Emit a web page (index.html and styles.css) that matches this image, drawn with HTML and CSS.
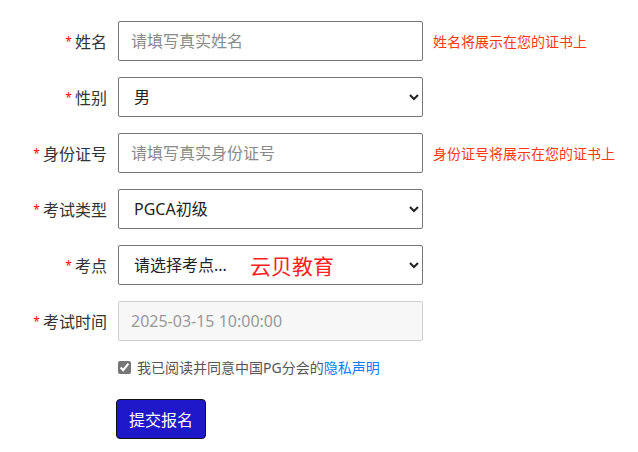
FILE: index.html
```html
<!DOCTYPE html>
<html lang="zh-CN">
<head>
    <meta charset="UTF-8">
    <meta name="viewport" content="width=device-width, initial-scale=1.0">
    <title>报名</title>
    <link rel="stylesheet" href="styles.css">
</head>
<body>
    <form class="signup">
        <div class="row">
            <label class="lab"><i>*</i>姓名</label>
            <input type="text" class="field" placeholder="请填写真实姓名">
            <span class="hint">姓名将展示在您的证书上</span>
        </div>
        <div class="row">
            <label class="lab"><i>*</i>性别</label>
            <select class="field">
                <option>男</option>
                <option>女</option>
            </select>
        </div>
        <div class="row">
            <label class="lab"><i>*</i>身份证号</label>
            <input type="text" class="field" placeholder="请填写真实身份证号">
            <span class="hint">身份证号将展示在您的证书上</span>
        </div>
        <div class="row">
            <label class="lab"><i>*</i>考试类型</label>
            <select class="field">
                <option>PGCA初级</option>
            </select>
        </div>
        <div class="row">
            <label class="lab"><i>*</i>考点</label>
            <div class="wrap">
                <select class="field">
                    <option>请选择考点...</option>
                </select>
                <span class="mark">云贝教育</span>
            </div>
        </div>
        <div class="row">
            <label class="lab"><i>*</i>考试时间</label>
            <input type="text" class="field" value="2025-03-15 10:00:00" disabled>
        </div>
        <div class="agree">
            <input type="checkbox" checked>
            <span>我已阅读并同意中国PG分会的<a href="#">隐私声明</a></span>
        </div>
        <div class="actions">
            <button type="button" class="btn">提交报名</button>
        </div>
    </form>
</body>
</html>
```

FILE: styles.css
```css
*{
    margin: 0;padding: 0;box-sizing: border-box;
}
body{
    font-family: "Noto Sans", "Noto Sans CJK SC", sans-serif;
    color: #333;
    background: #fff;
}
.signup{
    padding-top: 21px;
}
.row{
    display: flex;
    align-items: center;
    height: 40px;
    margin-bottom: 16px;
}
.lab{
    width: 108px;
    text-align: right;
    font-size: 16px;
    padding-right: 1px;
}
.lab>i{
    font-style: normal;
    color: #f00;
    font-size: 12px;
    margin-right: 3px;
    vertical-align: 2px;
}
.field{
    margin-left: 10px;
    width: 305px;
    height: 40px;
    border: 1px solid #767676;
    border-radius: 2px;
    padding: 0 12px;
    font-family: "Noto Sans", "Noto Sans CJK SC", sans-serif;
    font-size: 16px;
    color: #222;
    background: #fff;
    outline: none;
}
select.field{
    padding-left: 11px;
}
.field::placeholder{
    color: #8a8a8a;
}
.field:disabled{
    background: #f7f7f7;
    border-color: #cfcfcf;
    color: #999;
}
.wrap{
    position: relative;
}
.mark{
    position: absolute;
    left: 142px;
    top: 5px;
    font-size: 21px;
    color: #ff2020;
    pointer-events: none;
}
.hint{
    margin-left: 10px;
    font-size: 14px;
    color: #ff3a12;
}
.agree{
    display: flex;
    align-items: center;
    margin: 2px 0 0 118px;
    font-size: 14px;
    color: #555;
}
.agree>input{
    width: 13px;
    height: 13px;
    margin-right: 6px;
    accent-color: #767676;
}
.agree a{
    color: #0b7bff;
    text-decoration: none;
}
.actions{
    margin: 22px 0 0 116px;
}
.btn{
    width: 90px;
    height: 40px;
    background: #1e18c9;
    color: #fff;
    border: 1px solid #111;
    border-radius: 4px;
    font-family: "Noto Sans", "Noto Sans CJK SC", sans-serif;
    font-size: 16px;
}
```
